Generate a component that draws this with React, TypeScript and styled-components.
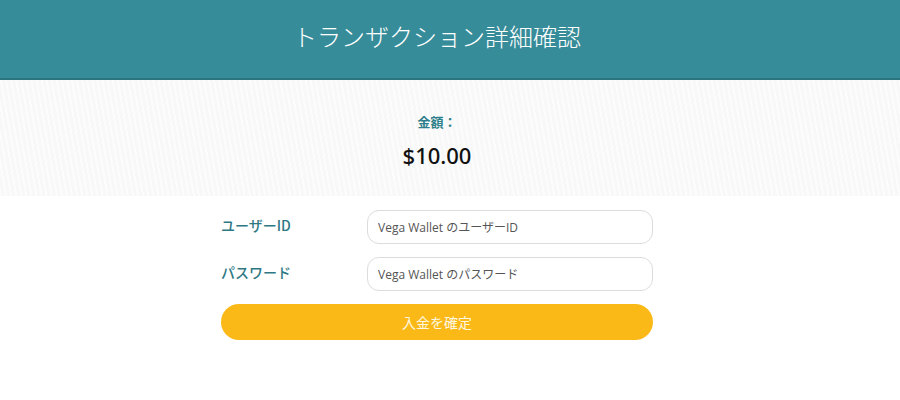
import React from 'react'
import styled, { createGlobalStyle } from 'styled-components'

const Global = createGlobalStyle`
  body {
    margin: 0;
    background: #ffffff;
    font-family: "Open Sans", "Noto Sans CJK JP", sans-serif;
  }
`

const Page = styled.div`
  width: 900px;
`

const Header = styled.header`
  height: 80px;
  background: #378c99;
  border-bottom: 2px solid #2b7480;
  display: flex;
  align-items: center;
  justify-content: center;
  padding-right: 26px;
  padding-bottom: 8px;
  box-sizing: border-box;
`

const Title = styled.h1`
  margin: 0;
  color: #ffffff;
  font-family: "Noto Sans CJK JP", sans-serif;
  font-weight: 300;
  font-size: 24px;
`

const AmountBox = styled.section`
  height: 116px;
  background-color: #f8f8f8;
  background-image: repeating-linear-gradient(
    80deg,
    rgba(255, 255, 255, 0.6) 0px,
    rgba(255, 255, 255, 0.6) 2px,
    transparent 2px,
    transparent 5px
  );
  display: flex;
  flex-direction: column;
  align-items: center;
  padding: 32px 26px 0 0;
  box-sizing: border-box;
`

const AmountLabel = styled.div`
  color: #2d7f8a;
  font-family: "Noto Sans CJK JP", sans-serif;
  font-weight: 700;
  font-size: 13px;
  line-height: 20px;
`

const AmountValue = styled.div`
  margin-top: 10px;
  color: #111111;
  font-family: "Noto Sans", sans-serif;
  font-size: 22px;
  font-weight: 500;
  line-height: 26px;
`

const Form = styled.form`
  width: 432px;
  margin: 14px 0 0 221px;
  display: flex;
  flex-direction: column;
  gap: 13px;
`

const Row = styled.div`
  display: grid;
  grid-template-columns: 146px 1fr;
  align-items: start;
`

const Label = styled.label`
  color: #2e7884;
  font-family: "Noto Sans CJK JP", sans-serif;
  font-weight: 500;
  font-size: 14px;
  line-height: 20px;
  padding-top: 5px;
`

const Input = styled.input`
  height: 34px;
  box-sizing: border-box;
  border: 1px solid #dcdcdc;
  border-radius: 12px;
  padding: 0 10px;
  font-family: "Open Sans", "Noto Sans CJK JP", sans-serif;
  font-size: 12px;
  color: #333;
  outline: none;
  &::placeholder {
    color: #555555;
  }
`

const Submit = styled.button`
  height: 36px;
  border: none;
  border-radius: 18px;
  background: #fbb917;
  color: #fff7e0;
  font-family: "Noto Sans CJK JP", sans-serif;
  font-size: 14px;
  cursor: pointer;
`

export default function App() {
  return (
    <Page>
      <Global />
      <Header>
        <Title>トランザクション詳細確認</Title>
      </Header>
      <AmountBox>
        <AmountLabel>金額：</AmountLabel>
        <AmountValue>$10.00</AmountValue>
      </AmountBox>
      <Form onSubmit={(e) => e.preventDefault()}>
        <Row>
          <Label>ユーザーID</Label>
          <Input placeholder="Vega Wallet のユーザーID" />
        </Row>
        <Row>
          <Label>パスワード</Label>
          <Input type="password" placeholder="Vega Wallet のパスワード" />
        </Row>
        <Submit type="submit">入金を確定</Submit>
      </Form>
    </Page>
  )
}
